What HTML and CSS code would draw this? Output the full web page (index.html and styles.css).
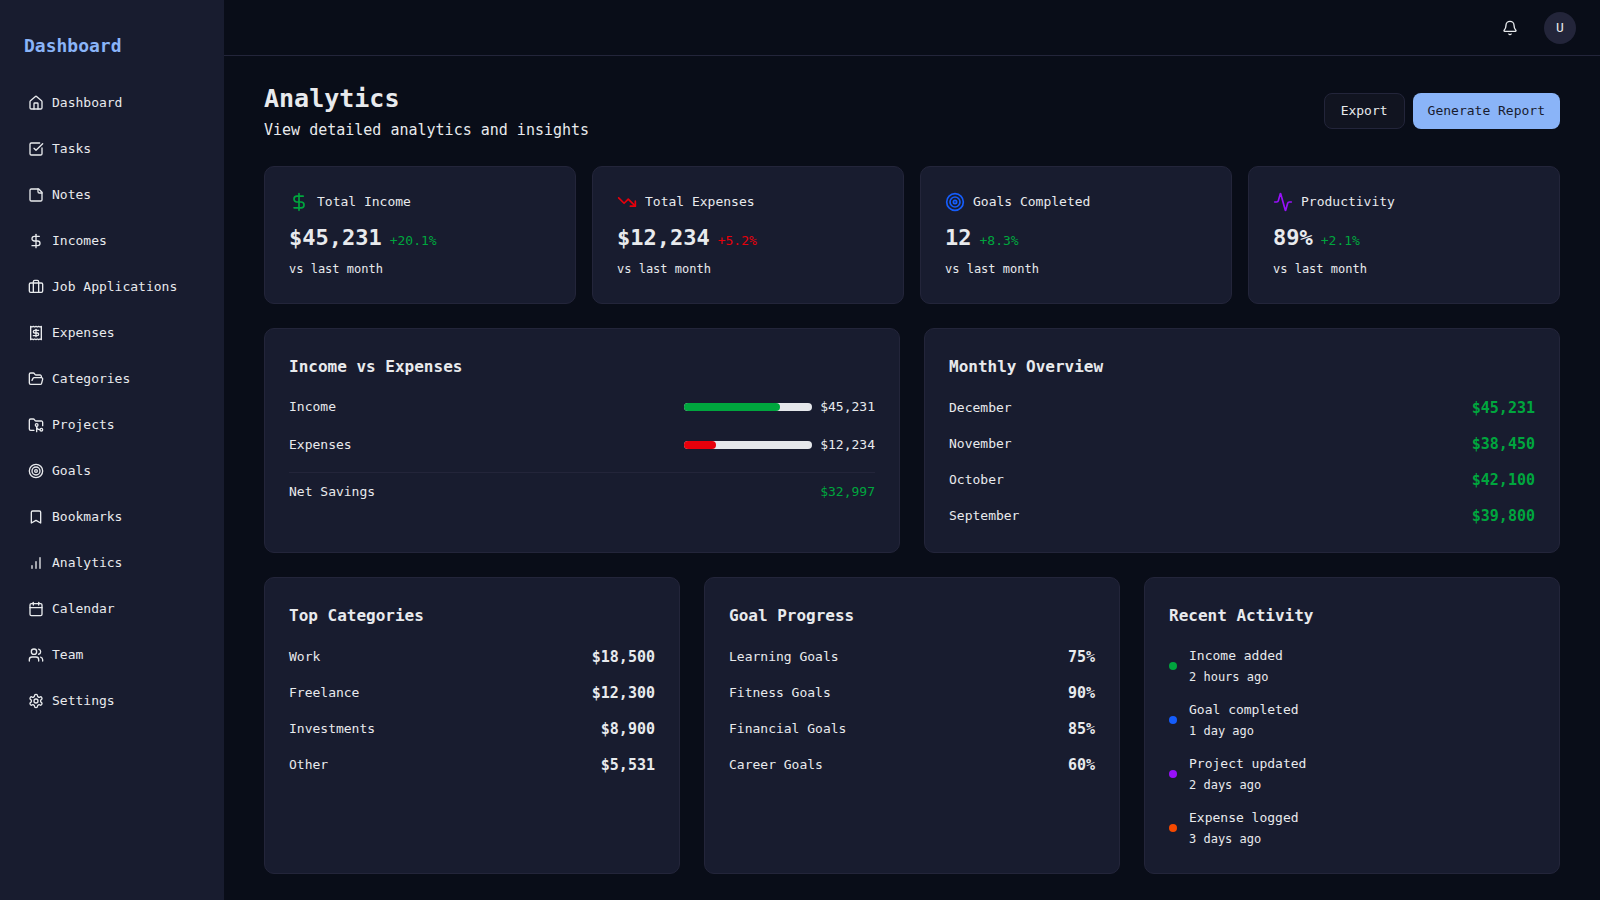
FILE: index.html
```html
<!DOCTYPE html>
<html lang="en">
<head>
<meta charset="utf-8">
<meta name="viewport" content="width=device-width, initial-scale=1">
<title>Analytics</title>
<link rel="stylesheet" href="styles.css">
</head>
<body>
<div class="app">
  <aside class="sidebar">
    <h2 class="brand">Dashboard</h2>
    <nav class="nav">
      <a class="nav-link" href="#"><svg class="icon" viewBox="0 0 24 24"><path d="M15 21v-8a1 1 0 0 0-1-1h-4a1 1 0 0 0-1 1v8"/><path d="M3 10a2 2 0 0 1 .709-1.528l7-5.999a2 2 0 0 1 2.582 0l7 5.999A2 2 0 0 1 21 10v9a2 2 0 0 1-2 2H5a2 2 0 0 1-2-2z"/></svg>Dashboard</a>
      <a class="nav-link" href="#"><svg class="icon" viewBox="0 0 24 24"><path d="M21 10.5V19a2 2 0 0 1-2 2H5a2 2 0 0 1-2-2V5a2 2 0 0 1 2-2h12.5"/><path d="m9 11 3 3L22 4"/></svg>Tasks</a>
      <a class="nav-link" href="#"><svg class="icon" viewBox="0 0 24 24"><path d="M16 3H5a2 2 0 0 0-2 2v14a2 2 0 0 0 2 2h14a2 2 0 0 0 2-2V8Z"/><path d="M15 3v4a2 2 0 0 0 2 2h4"/></svg>Notes</a>
      <a class="nav-link" href="#"><svg class="icon" viewBox="0 0 24 24"><path d="M12 2v20"/><path d="M17 5H9.5a3.5 3.5 0 0 0 0 7h5a3.5 3.5 0 0 1 0 7H6"/></svg>Incomes</a>
      <a class="nav-link" href="#"><svg class="icon" viewBox="0 0 24 24"><path d="M16 20V4a2 2 0 0 0-2-2h-4a2 2 0 0 0-2 2v16"/><rect width="20" height="14" x="2" y="6" rx="2"/></svg>Job Applications</a>
      <a class="nav-link" href="#"><svg class="icon" viewBox="0 0 24 24"><path d="M4 2v20l2-1 2 1 2-1 2 1 2-1 2 1 2-1 2 1V2l-2 1-2-1-2 1-2-1-2 1-2-1-2 1Z"/><path d="M16 8h-6a2 2 0 1 0 0 4h4a2 2 0 1 1 0 4H8"/><path d="M12 17.5v-11"/></svg>Expenses</a>
      <a class="nav-link" href="#"><svg class="icon" viewBox="0 0 24 24"><path d="m6 14 1.5-2.9A2 2 0 0 1 9.24 10H20a2 2 0 0 1 1.94 2.5l-1.54 6a2 2 0 0 1-1.95 1.5H4a2 2 0 0 1-2-2V5a2 2 0 0 1 2-2h3.9a2 2 0 0 1 1.69.9l.81 1.2a2 2 0 0 0 1.67.9H18a2 2 0 0 1 2 2v2"/></svg>Categories</a>
      <a class="nav-link" href="#"><svg class="icon" viewBox="0 0 24 24"><path d="M9 20H4a2 2 0 0 1-2-2V5a2 2 0 0 1 2-2h3.9a2 2 0 0 1 1.69.9l.81 1.2a2 2 0 0 0 1.67.9H20a2 2 0 0 1 2 2v5"/><circle cx="13" cy="12" r="2"/><path d="M18 19c-2.8 0-5-2.2-5-5v8"/><circle cx="20" cy="19" r="2"/></svg>Projects</a>
      <a class="nav-link" href="#"><svg class="icon" viewBox="0 0 24 24"><circle cx="12" cy="12" r="10"/><circle cx="12" cy="12" r="6"/><circle cx="12" cy="12" r="2"/></svg>Goals</a>
      <a class="nav-link" href="#"><svg class="icon" viewBox="0 0 24 24"><path d="m19 21-7-4-7 4V5a2 2 0 0 1 2-2h10a2 2 0 0 1 2 2v16z"/></svg>Bookmarks</a>
      <a class="nav-link" href="#"><svg class="icon" viewBox="0 0 24 24"><path d="M12 20V10"/><path d="M18 20V4"/><path d="M6 20v-4"/></svg>Analytics</a>
      <a class="nav-link" href="#"><svg class="icon" viewBox="0 0 24 24"><path d="M8 2v4"/><path d="M16 2v4"/><rect width="18" height="18" x="3" y="4" rx="2"/><path d="M3 10h18"/></svg>Calendar</a>
      <a class="nav-link" href="#"><svg class="icon" viewBox="0 0 24 24"><path d="M16 21v-2a4 4 0 0 0-4-4H6a4 4 0 0 0-4 4v2"/><circle cx="9" cy="7" r="4"/><path d="M22 21v-2a4 4 0 0 0-3-3.87"/><path d="M16 3.13a4 4 0 0 1 0 7.75"/></svg>Team</a>
      <a class="nav-link" href="#"><svg class="icon" viewBox="0 0 24 24"><path d="M12.22 2h-.44a2 2 0 0 0-2 2v.18a2 2 0 0 1-1 1.73l-.43.25a2 2 0 0 1-2 0l-.15-.08a2 2 0 0 0-2.73.73l-.22.38a2 2 0 0 0 .73 2.73l.15.1a2 2 0 0 1 1 1.72v.51a2 2 0 0 1-1 1.74l-.15.09a2 2 0 0 0-.73 2.73l.22.38a2 2 0 0 0 2.73.73l.15-.08a2 2 0 0 1 2 0l.43.25a2 2 0 0 1 1 1.73V20a2 2 0 0 0 2 2h.44a2 2 0 0 0 2-2v-.18a2 2 0 0 1 1-1.73l.43-.25a2 2 0 0 1 2 0l.15.08a2 2 0 0 0 2.73-.73l.22-.39a2 2 0 0 0-.73-2.73l-.15-.08a2 2 0 0 1-1-1.74v-.5a2 2 0 0 1 1-1.74l.15-.09a2 2 0 0 0 .73-2.73l-.22-.38a2 2 0 0 0-2.73-.73l-.15.08a2 2 0 0 1-2 0l-.43-.25a2 2 0 0 1-1-1.73V4a2 2 0 0 0-2-2z"/><circle cx="12" cy="12" r="3"/></svg>Settings</a>
    </nav>
  </aside>

  <div class="page">
    <header class="topbar">
      <button class="icon-button" type="button" aria-label="Notifications"><svg class="icon" viewBox="0 0 24 24"><path d="M10.268 21a2 2 0 0 0 3.464 0"/><path d="M3.262 15.326A1 1 0 0 0 4 17h16a1 1 0 0 0 .74-1.673C19.41 13.956 18 12.499 18 8A6 6 0 0 0 6 8c0 4.499-1.411 5.956-2.738 7.326"/></svg></button>
      <button class="avatar" type="button">U</button>
    </header>

    <main class="content">
      <div class="page-head">
        <div>
          <h1 class="page-title">Analytics</h1>
          <p class="page-subtitle">View detailed analytics and insights</p>
        </div>
        <div class="actions">
          <button class="button button-outline" type="button">Export</button>
          <button class="button button-primary" type="button">Generate Report</button>
        </div>
      </div>

      <section class="stats">
        <article class="card">
          <div class="stat-label"><svg class="icon icon-large green" viewBox="0 0 24 24"><path d="M12 2v20"/><path d="M17 5H9.5a3.5 3.5 0 0 0 0 7h5a3.5 3.5 0 0 1 0 7H6"/></svg>Total Income</div>
          <div class="stat-figures"><span class="stat-value">$45,231</span><span class="green">+20.1%</span></div>
          <p class="small">vs last month</p>
        </article>
        <article class="card">
          <div class="stat-label"><svg class="icon icon-large red" viewBox="0 0 24 24"><path d="M16 17h6v-6"/><path d="m22 17-8.5-8.5-5 5L2 7"/></svg>Total Expenses</div>
          <div class="stat-figures"><span class="stat-value">$12,234</span><span class="red">+5.2%</span></div>
          <p class="small">vs last month</p>
        </article>
        <article class="card">
          <div class="stat-label"><svg class="icon icon-large blue" viewBox="0 0 24 24"><circle cx="12" cy="12" r="10"/><circle cx="12" cy="12" r="6"/><circle cx="12" cy="12" r="2"/></svg>Goals Completed</div>
          <div class="stat-figures"><span class="stat-value">12</span><span class="green">+8.3%</span></div>
          <p class="small">vs last month</p>
        </article>
        <article class="card">
          <div class="stat-label"><svg class="icon icon-large purple" viewBox="0 0 24 24"><path d="M22 12h-2.48a2 2 0 0 0-1.93 1.46l-2.35 8.36a.25.25 0 0 1-.48 0L9.24 2.18a.25.25 0 0 0-.48 0l-2.35 8.36A2 2 0 0 1 4.49 12H2"/></svg>Productivity</div>
          <div class="stat-figures"><span class="stat-value">89%</span><span class="green">+2.1%</span></div>
          <p class="small">vs last month</p>
        </article>
      </section>

      <section class="halves">
        <article class="card">
          <h3 class="card-title">Income vs Expenses</h3>
          <div class="bars">
            <div class="row"><span>Income</span><div class="meter"><div class="track"><div class="fill fill-green" style="width: 75%"></div></div><span>$45,231</span></div></div>
            <div class="row"><span>Expenses</span><div class="meter"><div class="track"><div class="fill fill-red" style="width: 25%"></div></div><span>$12,234</span></div></div>
            <div class="row row-total"><span>Net Savings</span><span class="green">$32,997</span></div>
          </div>
        </article>
        <article class="card">
          <h3 class="card-title">Monthly Overview</h3>
          <div class="list">
            <div class="row"><span>December</span><span class="amount green">$45,231</span></div>
            <div class="row"><span>November</span><span class="amount green">$38,450</span></div>
            <div class="row"><span>October</span><span class="amount green">$42,100</span></div>
            <div class="row"><span>September</span><span class="amount green">$39,800</span></div>
          </div>
        </article>
      </section>

      <section class="thirds">
        <article class="card">
          <h3 class="card-title">Top Categories</h3>
          <div class="list">
            <div class="row"><span>Work</span><span class="amount">$18,500</span></div>
            <div class="row"><span>Freelance</span><span class="amount">$12,300</span></div>
            <div class="row"><span>Investments</span><span class="amount">$8,900</span></div>
            <div class="row"><span>Other</span><span class="amount">$5,531</span></div>
          </div>
        </article>
        <article class="card">
          <h3 class="card-title">Goal Progress</h3>
          <div class="list">
            <div class="row"><span>Learning Goals</span><span class="amount">75%</span></div>
            <div class="row"><span>Fitness Goals</span><span class="amount">90%</span></div>
            <div class="row"><span>Financial Goals</span><span class="amount">85%</span></div>
            <div class="row"><span>Career Goals</span><span class="amount">60%</span></div>
          </div>
        </article>
        <article class="card">
          <h3 class="card-title">Recent Activity</h3>
          <div class="list">
            <div class="activity"><span class="dot green"></span><div><p>Income added</p><p class="small">2 hours ago</p></div></div>
            <div class="activity"><span class="dot blue"></span><div><p>Goal completed</p><p class="small">1 day ago</p></div></div>
            <div class="activity"><span class="dot purple"></span><div><p>Project updated</p><p class="small">2 days ago</p></div></div>
            <div class="activity"><span class="dot orange"></span><div><p>Expense logged</p><p class="small">3 days ago</p></div></div>
          </div>
        </article>
      </section>
    </main>
  </div>
</div>
</body>
</html>
```
FILE: styles.css
```css
:root {
  --bg: #090d18;
  --surface: #181c2f;
  --button: #111420;
  --border: #23253a;
  --text: #e8eaed;
  --primary: #8ab4f8;
}

* {
  box-sizing: border-box;
  margin: 0;
}

body {
  background: var(--bg);
  color: var(--text);
  font: 13px/22px Consolas, "DejaVu Sans Mono", "Liberation Mono", monospace;
}

button {
  font: inherit;
  color: inherit;
  border: 0;
  cursor: pointer;
}

.app {
  display: flex;
  min-height: 100vh;
}

.sidebar {
  flex: none;
  width: 224px;
  padding: 24px 16px;
  background: var(--surface);
}

.brand {
  padding: 6px 8px 22px;
  color: var(--primary);
  font-size: 18px;
  line-height: 32px;
}

.nav {
  display: grid;
  gap: 8px;
}

.nav-link {
  display: flex;
  align-items: center;
  gap: 8px;
  padding: 8px 12px;
  color: inherit;
  text-decoration: none;
}

.icon {
  flex: none;
  width: 16px;
  height: 16px;
  fill: none;
  stroke: currentColor;
  stroke-width: 2;
  stroke-linecap: round;
  stroke-linejoin: round;
}

.icon-large {
  width: 20px;
  height: 20px;
}

.page {
  flex: 1;
  min-width: 0;
}

.topbar {
  display: flex;
  justify-content: flex-end;
  align-items: center;
  gap: 16px;
  height: 56px;
  padding: 0 24px;
  border-bottom: 1px solid var(--border);
}

.icon-button {
  display: grid;
  place-items: center;
  width: 36px;
  height: 36px;
  padding: 0;
  background: none;
}

.avatar {
  width: 32px;
  height: 32px;
  padding: 0;
  border-radius: 50%;
  background: var(--border);
}

.content {
  display: grid;
  gap: 24px;
  padding: 24px 40px;
}

.page-head {
  display: flex;
  justify-content: space-between;
  align-items: center;
}

.page-title {
  font-size: 25px;
  line-height: 38px;
}

.page-subtitle {
  font-size: 15px;
  line-height: 24px;
}

.actions {
  display: flex;
  gap: 8px;
}

.button {
  height: 36px;
  padding: 0 15px;
  border-radius: 8px;
}

.button-outline {
  padding: 0 16px;
  border: 1px solid var(--border);
  background: var(--button);
}

.button-primary {
  background: var(--primary);
  color: var(--surface);
}

.stats,
.halves,
.thirds {
  display: grid;
  gap: 24px;
}

.stats {
  grid-template-columns: repeat(4, 1fr);
  gap: 16px;
}

.halves {
  grid-template-columns: repeat(2, 1fr);
}

.thirds {
  grid-template-columns: repeat(3, 1fr);
}

.card {
  padding: 24px;
  border: 1px solid var(--border);
  border-radius: 10px;
  background: var(--surface);
}

.card-title {
  margin-bottom: 16px;
  font-size: 16px;
  line-height: 27px;
}

.stat-label {
  display: flex;
  align-items: center;
  gap: 8px;
  margin-bottom: 8px;
}

.stat-figures {
  display: flex;
  align-items: baseline;
  gap: 8px;
  margin-bottom: 4px;
}

.stat-value {
  font-size: 22px;
  font-weight: 700;
  line-height: 34px;
}

.small {
  font-size: 12px;
  line-height: 20px;
}

.row {
  display: flex;
  justify-content: space-between;
  align-items: center;
}

.bars {
  display: grid;
  gap: 16px;
}

.row-total {
  padding-top: 8px;
  border-top: 1px solid var(--border);
}

.meter {
  display: flex;
  align-items: center;
  gap: 8px;
}

.track {
  width: 128px;
  height: 8px;
  border-radius: 4px;
  background: #e5e7eb;
}

.fill {
  height: 100%;
  border-radius: 4px;
}

.fill-green {
  background: #00a63e;
}

.fill-red {
  background: #e7000b;
}

.list {
  display: grid;
  gap: 12px;
}

.amount {
  font-size: 15px;
  font-weight: 700;
  line-height: 24px;
}

.activity {
  display: flex;
  align-items: center;
  gap: 12px;
}

.dot {
  width: 8px;
  height: 8px;
  border-radius: 50%;
  background: currentColor;
}

.green {
  color: #00a63e;
}

.red {
  color: #e7000b;
}

.blue {
  color: #155dfc;
}

.purple {
  color: #9810fa;
}

.orange {
  color: #f54900;
}
```
